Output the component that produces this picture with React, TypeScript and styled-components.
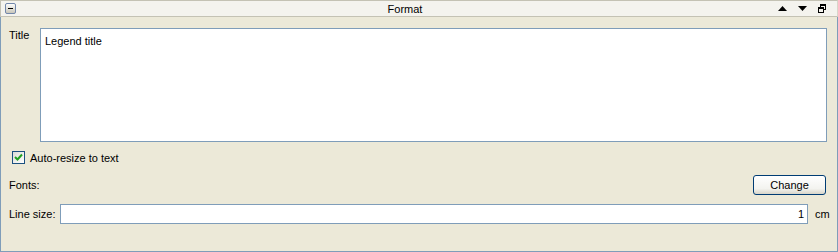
import React from 'react';
import styled, {createGlobalStyle} from 'styled-components';

const GlobalStyle = createGlobalStyle`
  body {
    margin: 0;
    background: #ece9d8;
    font-family: "Liberation Sans", Arial, sans-serif;
    font-size: 11px;
    color: #000;
  }
`

const Panel = styled.div`
  width: 838px;
  height: 252px;
  box-sizing: border-box;
  background: #ece9d8;
  display: flex;
  flex-direction: column;
`
const Header = styled.div`
  height: 17px;
  box-sizing: border-box;
  background: #f4f3ee;
  border: 1px solid #c4c2b4;
  border-right-color: #d8d6ca;
  display: flex;
  align-items: center;
  padding: 0 4px 0 4px;
`
const HeaderTitle = styled.div`
  flex: 1;
  text-align: center;
  padding-left: 16px;
`
const HeaderTools = styled.div`
  display: flex;
  align-items: center;
  gap: 11px;
  padding-right: 7px;
`
const Body = styled.div`
  flex: 1;
  border: 1px solid #7f9db9;
  border-top: none;
  display: flex;
  flex-direction: column;
  padding: 11px 10px 0 8px;
`
const Row = styled.div<{gap?: number; top?: number}>`
  display: flex;
  align-items: center;
  gap: ${p => p.gap ?? 0}px;
  margin-top: ${p => p.top ?? 0}px;
`
const Label = styled.span<{w?: number}>`
  width: ${p => (p.w ? p.w + 'px' : 'auto')};
  flex: none;
`
const TitleRow = styled.div`
  display: flex;
  align-items: flex-start;
`
const TitleLabel = styled.span`
  width: 31px;
  flex: none;
  padding-top: 1px;
`
const TextBox = styled.div`
  flex: 1;
  height: 114px;
  box-sizing: border-box;
  background: #fff;
  border: 1px solid #7f9db9;
  padding: 6px 4px;
  line-height: 13px;
`
const CheckBox = styled.span`
  width: 13px;
  height: 13px;
  box-sizing: border-box;
  border: 1px solid #1c5180;
  background: linear-gradient(135deg, #dcdcd7, #fff);
  display: inline-flex;
  align-items: center;
  justify-content: center;
  margin-left: 3px;
`
const Spacer = styled.div`
  flex: 1;
`
const Button = styled.button`
  width: 73px;
  height: 20px;
  box-sizing: border-box;
  border: 1px solid #003c74;
  border-radius: 3px;
  background: linear-gradient(#ffffff, #f3f3ef 70%, #d8d5c9);
  font: inherit;
  color: #000;
  padding: 0;
  margin-right: 1px;
`
const Input = styled.div`
  flex: 1;
  height: 20px;
  box-sizing: border-box;
  background: #fff;
  border: 1px solid #7f9db9;
  display: flex;
  align-items: center;
  justify-content: flex-end;
  padding-right: 3px;
`
const Unit = styled.span`
  margin-left: 7px;
  width: 12px;
`

const CollapseIcon = () => (
  <svg width="11" height="11" viewBox="0 0 11 11">
    <defs>
      <linearGradient id="cg" x1="0" y1="0" x2="0" y2="1">
        <stop offset="0" stopColor="#ffffff" />
        <stop offset="1" stopColor="#c6c3b6" />
      </linearGradient>
    </defs>
    <rect x="0.5" y="0.5" width="10" height="10" rx="1.5" fill="url(#cg)" stroke="#7287ab" />
    <rect x="3" y="5" width="5" height="1" fill="#000" />
  </svg>
)

const UpIcon = () => (
  <svg width="9" height="5" viewBox="0 0 9 5">
    <path d="M0 5 L4.5 0 L9 5 Z" fill="#000" />
  </svg>
)

const DownIcon = () => (
  <svg width="9" height="5" viewBox="0 0 9 5">
    <path d="M0 0 L9 0 L4.5 5 Z" fill="#000" />
  </svg>
)

const RestoreIcon = () => (
  <svg width="8" height="9" viewBox="0 0 8 9">
    <path d="M2 0 H8 V6 H6 V5 H7 V2 H3 V3 H2 Z" fill="#000" />
    <path d="M0 3 H6 V9 H0 Z M1 5 V8 H5 V5 Z" fill="#000" fillRule="evenodd" />
  </svg>
)

const CheckMark = () => (
  <svg width="9" height="9" viewBox="0 0 9 9">
    <path d="M1 4 L3.5 6.5 L8 1.5" stroke="#21a121" strokeWidth="2" fill="none" />
  </svg>
)

export default function App() {
  return (
    <>
      <GlobalStyle />
      <Panel>
        <Header>
          <CollapseIcon />
          <HeaderTitle>Format</HeaderTitle>
          <HeaderTools>
            <UpIcon />
            <DownIcon />
            <RestoreIcon />
          </HeaderTools>
        </Header>
        <Body>
          <TitleRow>
            <TitleLabel>Title</TitleLabel>
            <TextBox>Legend title</TextBox>
          </TitleRow>
          <Row top={9} gap={5}>
            <CheckBox><CheckMark /></CheckBox>
            <span>Auto-resize to text</span>
          </Row>
          <Row top={11}>
            <Label>Fonts:</Label>
            <Spacer />
            <Button>Change</Button>
          </Row>
          <Row top={9}>
            <Label w={51}>Line size:</Label>
            <Input>1</Input>
            <Unit>cm</Unit>
          </Row>
        </Body>
      </Panel>
    </>
  )
}
